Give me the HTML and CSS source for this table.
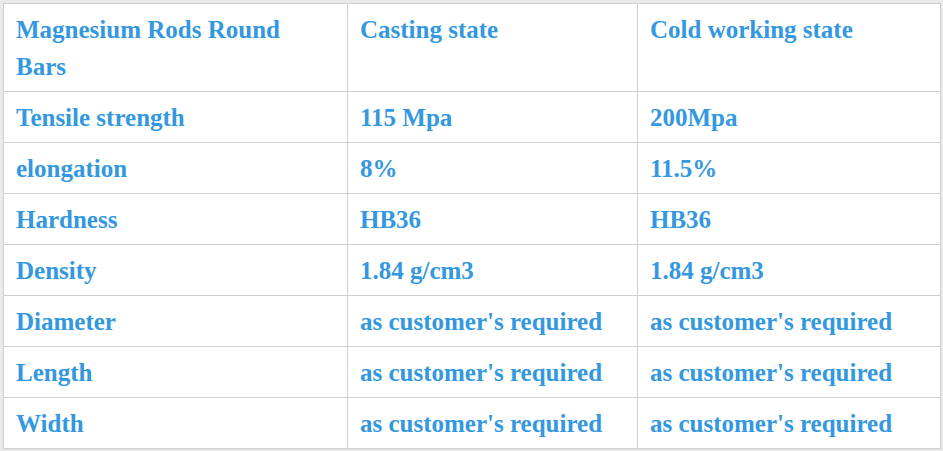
FILE: index.html
```html
<!DOCTYPE html>
<html lang="en">
<head>
  <meta charset="UTF-8" />
  <title>Magnesium Rods Round Bars</title>
  <link rel="stylesheet" href="styles.css">
</head>
<body>

<div class="wrap">
  <table class="spec">
    <colgroup>
      <col class="c1">
      <col class="c2">
      <col class="c3">
    </colgroup>
    <tr>
      <td>Magnesium Rods Round Bars</td>
      <td>Casting state</td>
      <td>Cold working state</td>
    </tr>
    <tr>
      <td>Tensile strength</td>
      <td>115 Mpa</td>
      <td>200Mpa</td>
    </tr>
    <tr>
      <td>elongation</td>
      <td>8%</td>
      <td>11.5%</td>
    </tr>
    <tr>
      <td>Hardness</td>
      <td>HB36</td>
      <td>HB36</td>
    </tr>
    <tr>
      <td>Density</td>
      <td>1.84 g/cm3</td>
      <td>1.84 g/cm3</td>
    </tr>
    <tr>
      <td>Diameter</td>
      <td>as customer's required</td>
      <td>as customer's required</td>
    </tr>
    <tr>
      <td>Length</td>
      <td>as customer's required</td>
      <td>as customer's required</td>
    </tr>
    <tr>
      <td>Width</td>
      <td>as customer's required</td>
      <td>as customer's required</td>
    </tr>
  </table>
</div>

</body>
</html>
```

FILE: styles.css
```css
* {
  box-sizing: border-box;
  margin: 0;
  padding: 0;
}

body {
  background: #e9e9e9;
  font-family: "Liberation Serif", "Times New Roman", serif;
}

.wrap {
  padding: 3px 3px 0 3px;
}

.spec {
  width: 937px;
  border-collapse: collapse;
  background: #fff;
  table-layout: fixed;
}

.c1 { width: 344px; }
.c2 { width: 290px; }
.c3 { width: 303px; }

.spec td {
  border: 1px solid #cfcfcf;
  padding: 7px 12px 6px 12px;
  color: #3398e0;
  font-size: 25px;
  font-weight: bold;
  line-height: 37px;
  vertical-align: top;
}
```
